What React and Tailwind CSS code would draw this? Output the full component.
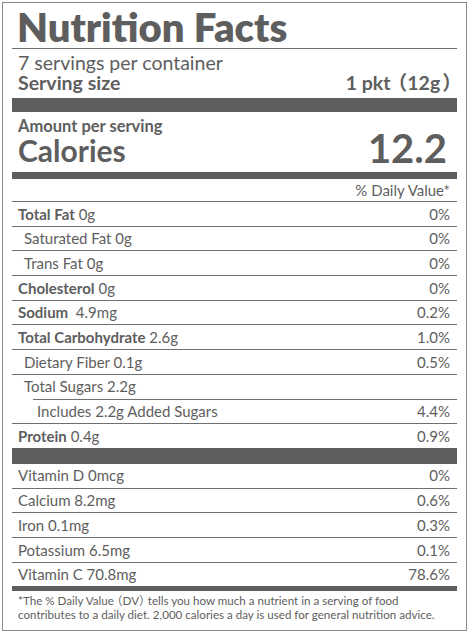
import React from 'react';

const font = { fontFamily: 'Lato, "Noto Sans CJK JP", sans-serif' };
const halfParen = { fontFeatureSettings: '"halt"' };

function Row({ children, value, indent = 'pl-[6px]', line = 'full' }) {
  return (
    <div className="flex flex-col">
      <div className={`flex h-[23.7px] items-center justify-between pr-[7px] text-[15px] ${indent}`}>
        <span className="whitespace-nowrap">{children}</span>
        <span>{value}</span>
      </div>
      {line === 'full' && <div className="h-px bg-[#6f6f6f]" />}
      {line === 'indent' && <div className="ml-[21px] h-px bg-[#6f6f6f]" />}
    </div>
  );
}

export default function App() {
  return (
    <div className="bg-white pl-[2px] pt-[2px]" style={font}>
      <div className="flex h-[629px] w-[465px] flex-col border border-[#8a8a8a] px-[9px] text-[#5e5e5e]">
        {/* header */}
        <div className="h-[46px] border-b border-[#6f6f6f] pl-[5px] pt-[4px] text-[40px] font-extrabold leading-[40px]">
          Nutrition Facts
        </div>
        <div className="flex h-[49px] flex-col pl-[6px] pr-[5px] pt-[4px]">
          <div className="text-[19.5px] leading-[20px]">7 servings per container</div>
          <div className="flex justify-between text-[19.5px] font-bold leading-[20px]">
            <span>Serving size</span>
            <span style={halfParen}>
              1 pkt<span className="ml-[7px]">（</span>12g<span className="ml-[2px]">）</span>
            </span>
          </div>
        </div>
        <div className="h-[14px] bg-[#5e5e5e]" />

        {/* calories */}
        <div className="flex h-[60px] items-end justify-between pl-[6px] pr-[10px]">
          <div className="flex flex-col pb-[6px] font-bold">
            <span className="text-[16.5px] leading-[17px]">Amount per serving</span>
            <span className="text-[30px] leading-[31px]">Calories</span>
          </div>
          <span className="pb-[4px] text-[40px] font-bold leading-[40px]">12.2</span>
        </div>
        <div className="h-[7px] bg-[#5e5e5e]" />

        <div className="flex h-[22px] items-center justify-end pr-[7px] text-[15px]">% Daily Value*</div>
        <div className="h-px bg-[#6f6f6f]" />

        <Row value="0%"><b>Total Fat</b> 0g</Row>
        <Row value="0%" indent="pl-[12px]">Saturated Fat 0g</Row>
        <Row value="0%" indent="pl-[12px]">Trans Fat 0g</Row>
        <Row value="0%"><b>Cholesterol</b> 0g</Row>
        <Row value="0.2%"><b>Sodium</b>&nbsp; 4.9mg</Row>
        <Row value="1.0%"><b>Total Carbohydrate</b> 2.6g</Row>
        <Row value="0.5%" indent="pl-[12px]">Dietary Fiber 0.1g</Row>
        <Row value="" indent="pl-[12px]" line="indent">Total Sugars 2.2g</Row>
        <Row value="4.4%" indent="pl-[25px]">Includes 2.2g Added Sugars</Row>
        <Row value="0.9%" line="none"><b>Protein</b> 0.4g</Row>
        <div className="h-[16px] bg-[#5e5e5e]" />

        <Row value="0%">Vitamin D 0mcg</Row>
        <Row value="0.6%">Calcium 8.2mg</Row>
        <Row value="0.3%">Iron 0.1mg</Row>
        <Row value="0.1%">Potassium 6.5mg</Row>
        <Row value="78.6%" line="none">Vitamin C 70.8mg</Row>
        <div className="h-[5px] bg-[#5e5e5e]" />

        <p className="whitespace-nowrap pl-[6px] pt-[3px] text-[11.6px] leading-[14px]">
          *The % Daily Value
          <span style={halfParen} className="mx-[3px]">（DV）</span>
          tells you how much a nutrient in a serving of food
          <br />
          contributes to a daily diet. 2,000 calories a day is used for general nutrition advice.
        </p>
      </div>
    </div>
  );
}
